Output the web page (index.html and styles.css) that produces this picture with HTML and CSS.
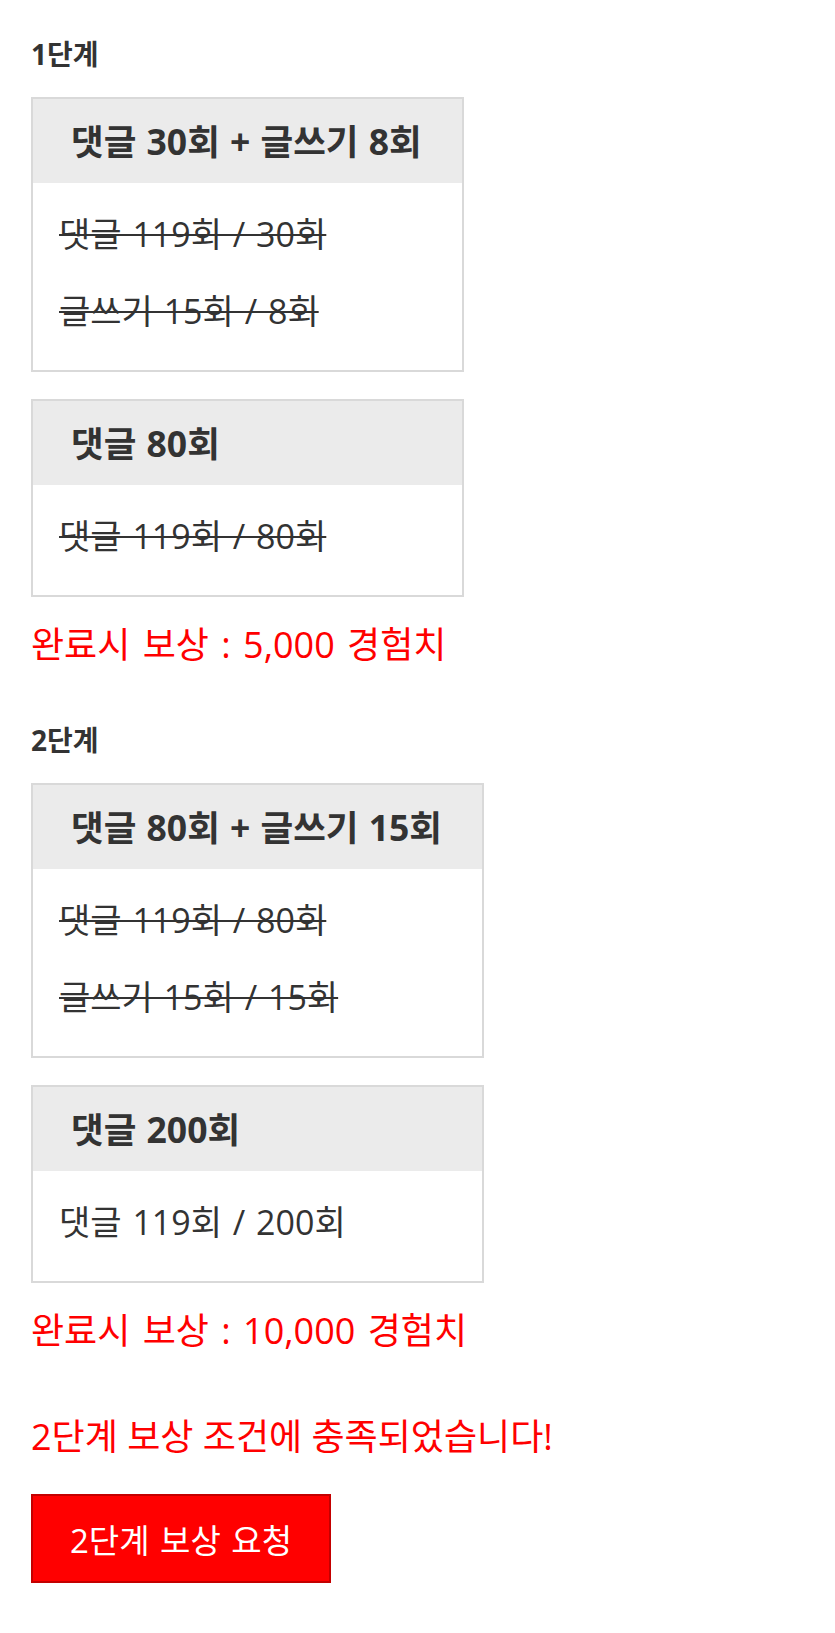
FILE: index.html
```html
<!DOCTYPE html>
<html lang="ko">
<head>
<meta charset="utf-8">
<title>단계 보상</title>
<link rel="stylesheet" href="styles.css">
</head>
<body>
<main class="page">
  <section class="stage">
    <h2 class="stage-title">1단계</h2>
    <div class="missions">
      <div class="mission">
        <div class="mission-head">댓글 30회 + 글쓰기 8회</div>
        <div class="mission-body">
          <p class="req done">댓글 119회 / 30회</p>
          <p class="req done">글쓰기 15회 / 8회</p>
        </div>
      </div>
      <div class="mission">
        <div class="mission-head">댓글 80회</div>
        <div class="mission-body">
          <p class="req done">댓글 119회 / 80회</p>
        </div>
      </div>
    </div>
    <p class="reward">완료시 보상 : 5,000 경험치</p>
  </section>

  <section class="stage">
    <h2 class="stage-title">2단계</h2>
    <div class="missions">
      <div class="mission">
        <div class="mission-head">댓글 80회 + 글쓰기 15회</div>
        <div class="mission-body">
          <p class="req done">댓글 119회 / 80회</p>
          <p class="req done">글쓰기 15회 / 15회</p>
        </div>
      </div>
      <div class="mission">
        <div class="mission-head">댓글 200회</div>
        <div class="mission-body">
          <p class="req">댓글 119회 / 200회</p>
        </div>
      </div>
    </div>
    <p class="reward">완료시 보상 : 10,000 경험치</p>
  </section>

  <p class="notice">2단계 보상 조건에 충족되었습니다!</p>
  <button class="claim" type="button">2단계 보상 요청</button>
</main>
</body>
</html>
```

FILE: styles.css
```css
html, body {
  margin: 0;
  padding: 0;
  background: #ffffff;
}

body {
  font-family: "Open Sans", "Noto Sans CJK KR", sans-serif;
  color: #333333;
}

.page {
  padding: 34px 31px 40px;
}

.stage-title {
  margin: 0 0 23px;
  font-size: 28px;
  line-height: 40px;
  font-weight: 700;
  color: #333333;
}

.missions {
  display: inline-grid;
  grid-template-columns: auto;
  row-gap: 27px;
}

.mission {
  border: 2px solid #d9d9d9;
  background: #ffffff;
}

.mission-head {
  background: #ebebeb;
  padding: 0 40px 0 38px;
  font-size: 35.5px;
  line-height: 84px;
  font-weight: 700;
  word-spacing: 1px;
  white-space: nowrap;
}

.mission-body {
  padding: 13px 26px 20px;
}

.req {
  margin: 0;
  font-size: 34px;
  line-height: 77px;
  word-spacing: 2px;
  white-space: nowrap;
}

.req.done {
  text-decoration: line-through;
  text-decoration-thickness: 2px;
}

.reward {
  margin: 23px 0 50px;
  font-size: 36px;
  line-height: 50px;
  word-spacing: 3px;
  color: #ff0000;
}

.stage + .stage .reward {
  margin-bottom: 56px;
}

.notice {
  margin: 0 0 32px;
  font-size: 36px;
  line-height: 50px;
  color: #ff0000;
}

.claim {
  display: block;
  width: 300px;
  height: 89px;
  padding: 0;
  background: #ff0000;
  border: 2px solid #c40000;
  color: #ffffff;
  font-family: "Open Sans", "Noto Sans CJK KR", sans-serif;
  font-size: 33px;
  font-weight: 400;
  word-spacing: 2px;
}
```
